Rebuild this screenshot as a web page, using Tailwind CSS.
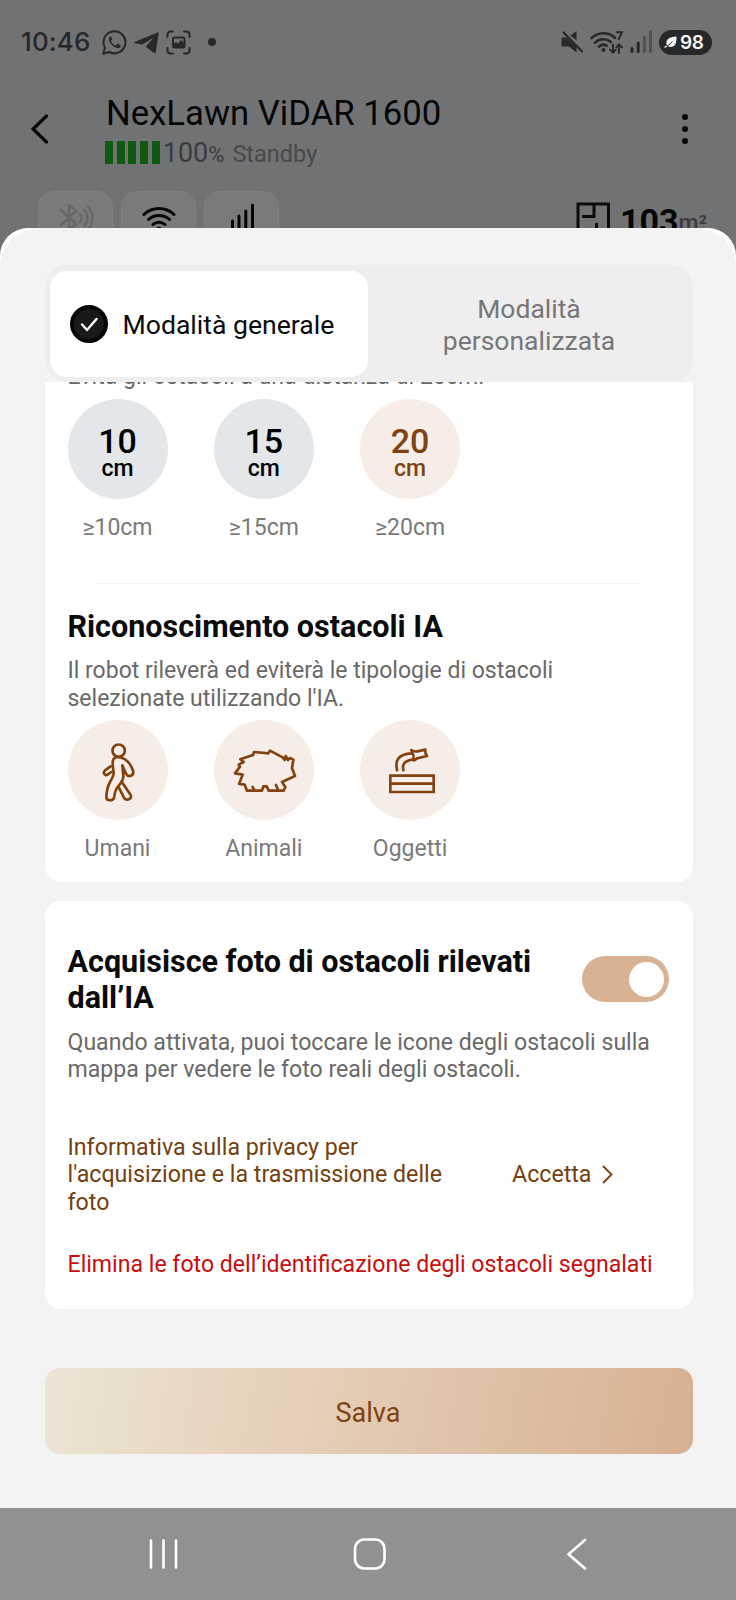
<!DOCTYPE html>
<html lang="it">
<head>
  <meta charset="UTF-8"/>
  <meta name="viewport" content="width=device-width,initial-scale=1"/>
  <title>NexLawn ViDAR 1600</title>
  <script src="https://cdn.jsdelivr.net/npm/@tailwindcss/browser@4"></script>
</head>
<body class="w-[736px] h-[1600px] overflow-hidden bg-[#717274] font-['Roboto',sans-serif] flex flex-col">

  <!-- ─── STATUS BAR ─────────────────────────────────────────────────────────── -->
  <div class="h-[84px] shrink-0 pl-[21px] pr-6 flex items-center text-[#272829]">
    <span class="w-[81px] text-[26px] leading-[30px] font-medium font-['Inter',sans-serif] tracking-[0.1px]">10:46</span>
    <svg class="w-[25px] h-[25px] mr-[7px]" viewBox="0 0 25 25" fill="none" stroke="currentColor" stroke-width="2">
      <path d="M1.2 23.8l1.7-6.1A11 11 0 1 1 7.3 22z" stroke-linejoin="round"/>
      <path d="M8.3 6.6c-.9.6-1.6 1.6-1.4 3 .5 3.9 4.7 8.2 8.9 8.5 1.5 0 2.7-.9 2.9-2.2.1-.6 0-.8-.4-1l-2.3-1.1c-.4-.2-.7-.1-1 .3l-1 1.2c-.3.3-.6.3-.9.1-1.8-.9-3-2-3.9-3.7-.2-.4-.1-.6.1-.9l.8-1c.2-.3.2-.5.1-.8l-1-2.2c-.2-.4-.4-.4-.9-.2z" fill="currentColor" stroke="none"/>
    </svg>
    <svg class="w-[26px] h-[25px] mr-1.5" viewBox="0 0 26 25" fill="currentColor">
      <path d="M1.200 11.700L23.500 2.500c.8-.3 1.300.1 1.200.9l-2.900 18.600c-.2 1.200-.8 1.500-1.700.9l-8.400-6.200 7.800-9-11 6.800-7-.9c-1.500-.3-1.600-1.300-.3-1.900z"/>
    </svg>
    <svg class="w-[25px] h-[25px]" viewBox="0 0 25 25" fill="none" stroke="currentColor" stroke-width="2" stroke-linecap="round">
      <path d="M1.500 7V4.500a3 3 0 0 1 3-3H7M18 1.500h2.500a3 3 0 0 1 3 3V7M23.500 18v2.500a3 3 0 0 1-3 3H18M7 23.500H4.500a3 3 0 0 1-3-3V18"/>
      <rect x="7" y="7.500" width="11.500" height="10" rx="1.500"/>
      <path d="M7.500 14l2.500-2 2 1.500 3-3.500 3 3v4.500H7.500z" fill="currentColor" stroke="none"/>
    </svg>
    <span class="size-2 rounded-full bg-[#272829] ml-[17px]"></span>
    <svg class="w-[23px] h-[24px] ml-auto mr-[6px]" viewBox="0 0 23 24" fill="currentColor">
      <path d="M1.500 7.500h4l10 9.500v5.500l-7.500-6h-6.500a1 1 0 0 1-1-1v-7a1 1 0 0 1 1-1zM9.500 5.500l6-4.500v9.500z"/>
      <path d="M2.500 2.500l18.500 19" stroke="currentColor" stroke-width="2.200" stroke-linecap="round"/>
    </svg>
    <svg class="w-[34px] h-[25px] mr-1.5" viewBox="0 0 34 25" fill="none" stroke="currentColor" stroke-width="2.600" stroke-linecap="round">
      <path d="M1.500 8.200a17 17 0 0 1 23.500-.4M5.200 12.700a11.500 11.500 0 0 1 15.500-.8M9 16.700a6 6 0 0 1 7.500-1"/>
      <circle cx="13.500" cy="20" r="2" fill="currentColor" stroke="none"/>
      <path d="M26.500 2.200h5.500l-3.300 7M23 14.500v8M20 19.700l3 3 3-3M29 23v-8.500M26.300 17.300l2.700-3 3 3" stroke-width="1.900"/>
    </svg>
    <svg class="w-[23px] h-[24px] mr-[6px]" viewBox="0 0 23 24" fill="none" stroke="currentColor" stroke-width="3" stroke-linecap="round">
      <path d="M2 18.500v3M8.200 13v8.500"/>
      <path d="M14.400 7.500v14M20.500 2v19.500" class="stroke-[#505152]"/>
    </svg>
    <div class="w-[53px] h-[25px] rounded-full bg-[#272829] text-[#f2f3f2] flex items-center pl-[5px]">
      <svg class="w-[13px] h-[12px] mr-[3px]" viewBox="0 0 13 12">
        <path d="M2.500 8C1.500 3.500 5 .8 12.500.5c.3 6.500-1.500 10.500-6 10.500-1.500 0-2.500-.5-3.200-1.200z" fill="currentColor"/>
        <path d="M.8 11c2.200-.3 4.700-2 7.500-5.500" stroke="#272829" stroke-width="1" fill="none"/>
        <path d="M.5 11.300l2.500-1.300" stroke="currentColor" stroke-width="1.300"/>
      </svg>
      <span class="text-[19px] leading-none font-semibold font-['Inter',sans-serif] tracking-[-0.500px]">98</span>
    </div>
  </div>

  <!-- ─── DEVICE HEADER ──────────────────────────────────────────────────────── -->
  <div class="h-[90px] shrink-0 pl-[31px] pr-[48px] flex items-center text-[#050606]">
    <svg class="w-[18px] h-[30px] mr-[56px]" viewBox="0 0 18 30" fill="none" stroke="currentColor" stroke-width="3.200" stroke-linecap="round">
      <path d="M15.500 2L2 15l13.500 13"/>
    </svg>
    <div class="flex-1 flex flex-col">
      <h1 class="text-[34.700px] leading-[40px] pl-px pt-[4px]">NexLawn ViDAR 1600</h1>
      <div class="h-[34px] mt-[2px] flex items-center">
        <div class="flex gap-[3.700px] mr-[3px] text-[#0f5a10]">
          <span class="w-2 h-[23px] bg-current"></span>
          <span class="w-2 h-[23px] bg-current"></span>
          <span class="w-2 h-[23px] bg-current"></span>
          <span class="w-2 h-[23px] bg-current"></span>
          <span class="w-2 h-[23px] bg-current"></span>
        </div>
        <p class="text-[27px] leading-[34px] text-[#3b3c3d] pt-[3px]">100<span class="text-[22px]">%</span></p>
        <p class="text-[23.500px] leading-[34px] text-[#48494a] ml-[8px] pt-[3px]">Standby</p>
      </div>
    </div>
    <div class="flex flex-col gap-1.5">
      <span class="size-1.5 rounded-full bg-[#050606]"></span>
      <span class="size-1.5 rounded-full bg-[#050606]"></span>
      <span class="size-1.5 rounded-full bg-[#050606]"></span>
    </div>
  </div>

  <div class="h-[54px] shrink-0 pt-[17px] pl-[38px] pr-[29px] flex items-start overflow-hidden">
    <div class="flex gap-2">
      <div class="w-[75px] h-[60px] rounded-[16px] bg-[#797b7a] border border-[#7e807f] flex justify-center pt-[10px] text-[#666867]">
        <svg class="w-9 h-8" viewBox="0 0 36 32" fill="none" stroke="currentColor" stroke-width="2.400" stroke-linecap="round" stroke-linejoin="round">
          <path d="M3 8l15 14-7 6V3l7 6L3 23M22 12a6 6 0 0 1 0 8M26 8a11 11 0 0 1 0 16M30 4.500a17 17 0 0 1 0 23"/>
        </svg>
      </div>
      <div class="w-[75px] h-[60px] rounded-[16px] bg-[#797b7a] border border-[#7e807f] flex justify-center pt-[13px] text-[#050606]">
        <svg class="w-[34px] h-[26px]" viewBox="0 0 34 26" fill="none" stroke="currentColor" stroke-width="3" stroke-linecap="round">
          <path d="M2 9.500a22 22 0 0 1 30 0M6.500 14.500a15.500 15.500 0 0 1 21 0M11 19.500a9 9 0 0 1 12 0"/>
          <circle cx="17" cy="24" r="2.500" fill="currentColor" stroke="none"/>
        </svg>
      </div>
      <div class="w-[75px] h-[60px] rounded-[16px] bg-[#797b7a] border border-[#7e807f] flex justify-center pt-[10px] text-[#050606]">
        <svg class="w-[26px] h-[30px]" viewBox="0 0 26 30" fill="none" stroke="currentColor" stroke-width="3" stroke-linecap="round">
          <path d="M3.500 19v11M10 14v16M16.800 9v20.500M23.500 3v26"/>
        </svg>
      </div>
    </div>
    <svg class="w-[34px] h-[34px] mt-[11px] ml-auto mr-[10px]" viewBox="0 0 34 34" fill="none" stroke="#0b0c0c" stroke-width="3">
      <path d="M2 34V2h30.500v32M18 3v11.500H6M20.500 21v12"/>
    </svg>
    <p class="text-[34px] leading-[40px] font-bold text-[#050606] mt-[10px]">103</p>
    <p class="text-[23px] leading-[26px] font-medium text-[#3b3c3d] mt-[20px]">m²</p>
  </div>

  <!-- ─── BOTTOM SHEET ───────────────────────────────────────────────────────── -->
  <main class="h-[1280px] shrink-0 bg-white rounded-t-[28px] overflow-hidden">
    <div class="h-full bg-[#f3f3f3] rounded-t-[40px] pl-[45px] pr-[43px] pt-[37px]">

      <!-- mode tabs -->
      <div class="h-[117px] rounded-[22px] bg-[#eeeeee] pl-[5px] pr-[3px] py-[5.500px] flex">
        <div class="w-[318px] h-[106px] rounded-[17px] bg-white flex items-center pl-5 text-[#0b0b0b]">
          <svg class="size-[38px] mr-[14.500px]" viewBox="0 0 38 38">
            <circle cx="19" cy="19" r="17" fill="#191919" stroke="#050505" stroke-width="4"/>
            <path d="M12 19.500l5 5.500 9.500-11" fill="none" stroke="#fff" stroke-width="2.400" stroke-linecap="round" stroke-linejoin="round"/>
          </svg>
          <span class="text-[26.600px] leading-8 pt-0.5">Modalità generale</span>
        </div>
        <div class="flex-1 flex items-center justify-center pt-[3px] text-center text-[26.500px] leading-8 text-[#777777]">
          <span>Modalità<br>personalizzata</span>
        </div>
      </div>

      <!-- obstacle distance and recognition -->
      <section class="h-[500px] bg-white rounded-b-[16px] pl-[22.500px] pr-[23px] overflow-hidden text-[#696969]">
        <p class="text-[23.100px] leading-[28px] h-[17px] mt-[-19px]">Evita gli ostacoli a una distanza di 20cm.</p>
        <div class="flex gap-[46.300px] mt-[19px] text-black">
          <div class="w-[100px] flex flex-col items-center">
            <div class="size-[100px] rounded-full bg-[#e3e7ea] flex flex-col items-center pt-[27px] font-medium">
              <span class="text-[34px] leading-[30px]">10</span>
              <span class="text-[23px] leading-[24px] mt-px">cm</span>
            </div>
            <span class="text-[23px] leading-7 mt-[15px] text-[#7a7a7a]">≥10cm</span>
          </div>
          <div class="w-[100px] flex flex-col items-center">
            <div class="size-[100px] rounded-full bg-[#e3e7ea] flex flex-col items-center pt-[27px] font-medium">
              <span class="text-[34px] leading-[30px]">15</span>
              <span class="text-[23px] leading-[24px] mt-px">cm</span>
            </div>
            <span class="text-[23px] leading-7 mt-[15px] text-[#7a7a7a]">≥15cm</span>
          </div>
          <div class="w-[100px] flex flex-col items-center">
            <div class="size-[100px] rounded-full bg-[#f6ede8] text-[#80420f] flex flex-col items-center pt-[27px] font-medium">
              <span class="text-[34px] leading-[30px]">20</span>
              <span class="text-[23px] leading-[24px] mt-px">cm</span>
            </div>
            <span class="text-[23px] leading-7 mt-[15px] text-[#7a7a7a]">≥20cm</span>
          </div>
        </div>

        <hr class="mx-[30px] mt-[41px] border-t-[1.500px] border-[#f3f3f3]"/>

        <h2 class="text-[30.500px] leading-9 font-bold text-[#0b0b0b] mt-[25px]">Riconoscimento ostacoli IA</h2>
        <p class="text-[23px] leading-[27.500px] mt-[12px]">Il robot rileverà ed eviterà le tipologie di ostacoli<br>selezionate utilizzando l'IA.</p>
        <div class="flex gap-[46.300px] mt-[8px]">
          <div class="w-[100px] flex flex-col items-center">
            <div class="size-[100px] rounded-full bg-[#f6ede8]">
              <svg class="size-full" viewBox="0 0 300 300" fill="none" stroke="#80420f" stroke-width="8" stroke-linecap="round" stroke-linejoin="round">
                <circle cx="152" cy="92" r="18.500"/>
                <path d="M150 111c-12 0-17 8-16 21l3 28c0 10-6 16-11 26-8 14-10 30-11 44 0 14 22 15 24 0 1-14 6-26 14-34 9-10 14-18 13-30l-3-30 11 25c7 13 25 6 21-9-5-14-9-21-17-28-8-8-16-12-28-13z"/>
                <path d="M128 139l-17 12c-8 8 1 18 9 12l10-7M161 185l27 40c6 12-13 19-20 8l-17-33"/>
              </svg>
            </div>
            <span class="text-[23px] leading-7 mt-[15px] text-[#7a7a7a]">Umani</span>
          </div>
          <div class="w-[100px] flex flex-col items-center">
            <div class="size-[100px] rounded-full bg-[#f6ede8]">
              <svg class="size-full" viewBox="0 0 300 300" fill="none" stroke="#80420f" stroke-width="8" stroke-linecap="round" stroke-linejoin="round">
                <path d="M117 105l3-9 43 4 5-8 38 20 6 8 3-12 7 12 6-6 10 5-4 26 9 23-39 18 10 15-5 11h-45l-6-13h-10l-4 13H99l-7-18-17-2 11-28-23-4 15-20-4-6 15-8-10-8zM116 201l4 8M186 195l6 14"/>
              </svg>
            </div>
            <span class="text-[23px] leading-7 mt-[15px] text-[#7a7a7a]">Animali</span>
          </div>
          <div class="w-[100px] flex flex-col items-center">
            <div class="size-[100px] rounded-full bg-[#f6ede8]">
              <svg class="size-full" viewBox="0 0 300 300" fill="none" stroke="#80420f" stroke-width="8">
                <path d="M91 167h130v49H91zM91 191h130"/>
                <path d="M112 154c-8-30 0-52 43-54M131 154c-6-20 0-31 29-36M154 90q9 6 18 4l24-5q-2 10 5 19l-21 5q-10 1-18 9 0-16-8-32z" stroke-linejoin="round"/>
              </svg>
            </div>
            <span class="text-[23px] leading-7 mt-[15px] text-[#7a7a7a]">Oggetti</span>
          </div>
        </div>
      </section>

      <!-- photo capture -->
      <section class="h-[408px] mt-[19px] bg-white rounded-[16px] pl-[22.500px] pr-[24px] pt-[43px] text-[#696969]">
        <div class="flex items-start justify-between">
          <h2 class="text-[30.500px] leading-9 font-bold text-[#0b0b0b]">Acquisisce foto di ostacoli rilevati<br>dall’IA</h2>
          <div class="w-[87px] h-[46px] mt-[12px] rounded-full bg-[#d9b193] flex items-center justify-end pr-[5px]">
            <span class="size-[35px] rounded-full bg-white"></span>
          </div>
        </div>
        <p class="text-[23.100px] leading-[27.300px] mt-[13px]">Quando attivata, puoi toccare le icone degli ostacoli sulla<br>mappa per vedere le foto reali degli ostacoli.</p>
        <div class="flex items-center mt-[50px] text-[#74400f] text-[23.200px] leading-[27.500px]">
          <p class="w-[444.500px]">Informativa sulla privacy per<br>l'acquisizione e la trasmissione delle<br>foto</p>
          <span>Accetta</span>
          <svg class="w-[11px] h-[19px] ml-[11px]" viewBox="0 0 11 19" fill="none" stroke="currentColor" stroke-width="1.800">
            <path d="M1 1l8.500 8.500L1 18"/>
          </svg>
        </div>
        <p class="text-[23.100px] leading-[27.500px] mt-[35px] text-[#c80d0d]">Elimina le foto dell’identificazione degli ostacoli segnalati</p>
      </section>

      <button class="w-full h-[86px] mt-[59px] rounded-[15px] bg-linear-[100deg,#ece5d6,#e7d6c0_28%,#d8b092] text-[27px] text-[#80420f] flex items-center justify-center pt-[5px] pr-[2px]">Salva</button>
    </div>
  </main>

  <!-- ─── NAVIGATION BAR ─────────────────────────────────────────────────────── -->
  <nav class="h-[92px] shrink-0 bg-[#919191] pl-[149px] pr-[149px] flex items-center text-white">
    <svg class="w-[30px] h-[32px] mr-[174px]" viewBox="0 0 30 32" stroke="currentColor" stroke-width="2.600" stroke-linecap="round">
      <path d="M2 2.500v27M14.500 2.500v27M27 2.500v27"/>
    </svg>
    <svg class="w-[34px] h-[32px]" viewBox="0 0 34 32" fill="none" stroke="currentColor" stroke-width="2.600">
      <rect x="2" y="1.500" width="29.500" height="29" rx="9.500"/>
    </svg>
    <svg class="w-[21px] h-[32px] ml-auto" viewBox="0 0 21 32" fill="none" stroke="currentColor" stroke-width="2.600" stroke-linecap="round" stroke-linejoin="round">
      <path d="M19 2L2.500 16.200 19 30.500"/>
    </svg>
  </nav>
</body>
</html>
